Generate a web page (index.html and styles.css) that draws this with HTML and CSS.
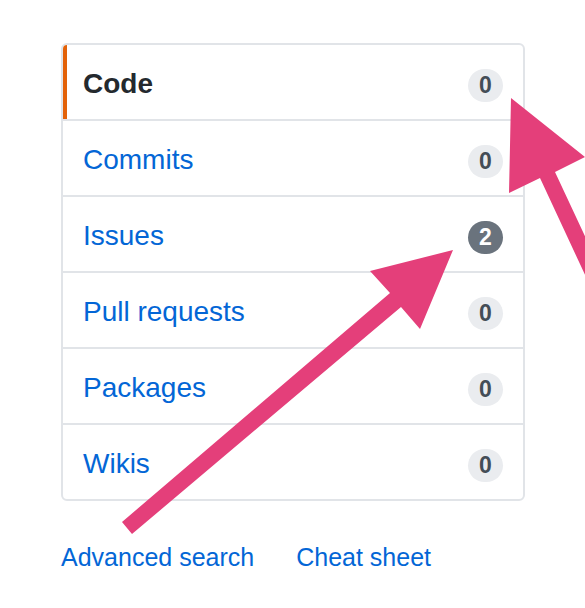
FILE: index.html
```html
<!DOCTYPE html>
<html>
<head>
<meta charset="utf-8">
<link rel="stylesheet" href="styles.css">
</head>
<body>
<div class="page">
  <nav class="menu">
    <a class="menu-item selected" href="#"><span class="label">Code</span><span class="counter">0</span></a>
    <a class="menu-item" href="#"><span class="label">Commits</span><span class="counter">0</span></a>
    <a class="menu-item" href="#"><span class="label">Issues</span><span class="counter dark">2</span></a>
    <a class="menu-item" href="#"><span class="label">Pull requests</span><span class="counter">0</span></a>
    <a class="menu-item" href="#"><span class="label">Packages</span><span class="counter">0</span></a>
    <a class="menu-item" href="#"><span class="label">Wikis</span><span class="counter">0</span></a>
  </nav>
  <div class="links">
    <a href="#">Advanced search</a>
    <a href="#">Cheat sheet</a>
  </div>
</div>
<svg class="arrows" width="585" height="608" viewBox="0 0 585 608">
  <polygon fill="#e43f7a" points="122,522 390,293 370,271 453,250 420,329 401,307 132,534"/>
  <polygon fill="#e43f7a" points="511,98 509,193 540,178 606,320 624,320 555,172 585,157"/>
</svg>
</body>
</html>
```

FILE: styles.css
```css
html, body {
  margin: 0;
  padding: 0;
  background: #ffffff;
}

body {
  position: relative;
  width: 585px;
  height: 608px;
  overflow: hidden;
  font-family: "Liberation Sans", Arial, sans-serif;
}

.page {
  padding: 43px 0 0 61px;
  width: 464px;
}

.menu {
  display: flex;
  flex-direction: column;
  border: 2px solid #e1e4e8;
  border-radius: 6px;
  overflow: hidden;
}

.menu-item {
  position: relative;
  display: flex;
  align-items: center;
  justify-content: space-between;
  height: 74px;
  padding: 0 20px;
  border-bottom: 2px solid #e1e4e8;
  color: #0366d6;
  text-decoration: none;
  font-size: 28px;
  line-height: 36px;
}

.menu-item:last-child {
  border-bottom: none;
}

.menu-item.selected {
  color: #24292e;
  font-weight: 700;
}

.menu-item.selected::before {
  content: "";
  position: absolute;
  left: 0;
  top: 0;
  bottom: 0;
  width: 4px;
  background: #e36209;
}

.label {
  margin-top: 3px;
}

.counter {
  display: inline-flex;
  align-items: center;
  justify-content: center;
  min-width: 35px;
  height: 33px;
  margin-top: 7px;
  border-radius: 17px;
  background: #eaecef;
  color: #444d56;
  font-size: 23px;
  font-weight: 700;
  line-height: 1;
}

.counter.dark {
  background: #6a737d;
  color: #ffffff;
}

.links {
  display: flex;
  gap: 42px;
  margin-top: 41px;
  font-size: 25px;
  line-height: 30px;
}

.links a {
  color: #0366d6;
  text-decoration: none;
}

.arrows {
  position: absolute;
  left: 0;
  top: 0;
  pointer-events: none;
}
```
